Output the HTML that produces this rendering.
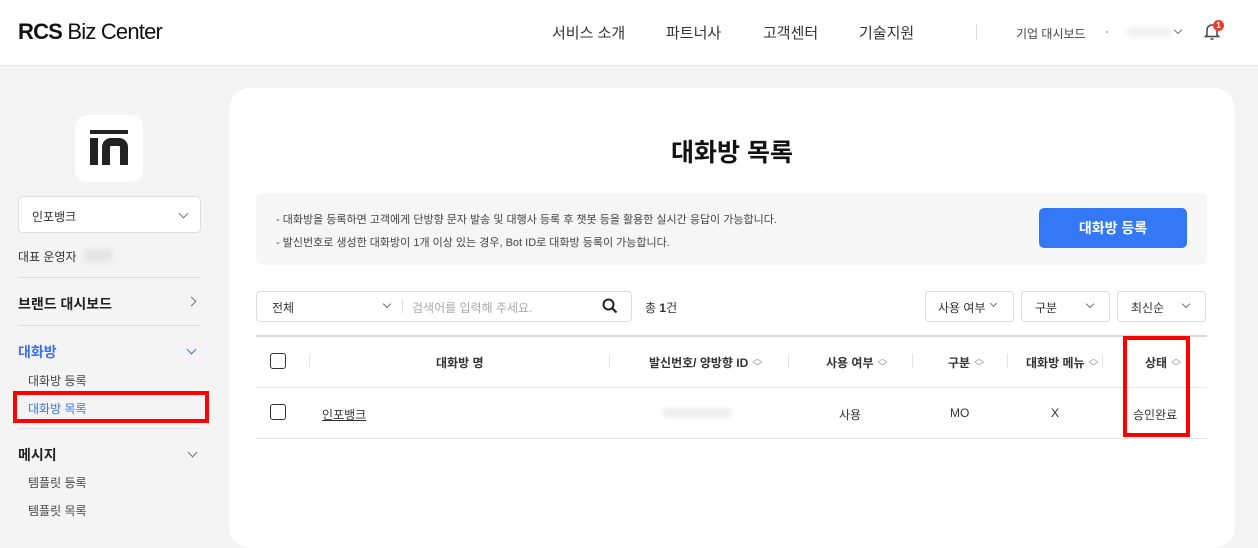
<!DOCTYPE html>
<html><head><meta charset="utf-8"><style>
*{margin:0;padding:0;box-sizing:border-box}
body{width:1258px;height:527px;overflow:hidden;background:#f4f4f4;font-family:"Liberation Sans","Noto Sans CJK KR",sans-serif;color:#222;position:relative}
.a{position:absolute;white-space:nowrap}
.hdr{position:absolute;left:0;top:0;width:1258px;height:66px;background:#fff;border-bottom:1px solid #e4e4e4}
.card{position:absolute;left:229px;top:88px;width:1006px;height:460px;background:#fff;border-radius:22px}
.chev{display:inline-block;width:7px;height:7px;border-right:1.3px solid #777;border-bottom:1.3px solid #777;transform:rotate(45deg)}
.a>.chev{display:block}
.sel{position:absolute;background:#fff;border:1px solid #ddd;border-radius:4px}
.cb{position:absolute;width:16px;height:16px;border:1.5px solid #333;border-radius:3px;background:#fff}
.sort{display:inline-block;color:#bbb;font-size:10px;line-height:8px;vertical-align:middle;margin-left:4px}
.th{font-size:12px;font-weight:bold;color:#333}
.td{font-size:12px;color:#333}
</style></head><body>
<div class="hdr"></div>
<div class="a" style="left:18px;top:19px;font-size:22px;color:#111;letter-spacing:-0.8px"><b>RCS</b> Biz Center</div>
<div class="a" style="left:552px;top:22px;font-size:15px;color:#333">서비스 소개</div>
<div class="a" style="left:666px;top:22px;font-size:15px;color:#333">파트너사</div>
<div class="a" style="left:763px;top:22px;font-size:15px;color:#333">고객센터</div>
<div class="a" style="left:859px;top:22px;font-size:15px;color:#333">기술지원</div>
<div class="a" style="left:976px;top:24px;width:1px;height:16px;background:#ddd"></div>
<div class="a" style="left:1016px;top:25px;font-size:12px;color:#444">기업 대시보드</div>
<div class="a" style="left:1106px;top:31px;width:2px;height:2px;background:#bbb"></div>
<div class="a" style="left:1126px;top:26px;width:46px;height:12px;background:#f2f2f2;border-radius:6px;filter:blur(2px)"></div>
<div class="a" style="left:1175px;top:27px"><span class="chev" style="width:6px;height:6px"></span></div>
<svg class="a" style="left:1204px;top:21px" width="18" height="20" viewBox="0 0 18 20"><path d="M3 14V9a5 5 0 0 1 10 0v5l1.5 1.5h-13z" fill="none" stroke="#444" stroke-width="1.5"/><path d="M6.5 17.5a2 2 0 0 0 3 0" stroke="#444" stroke-width="1.4" fill="none"/></svg>
<div class="a" style="left:1213px;top:20px;width:11px;height:11px;border-radius:50%;background:#f03c2e;color:#fff;font-size:8px;font-weight:bold;text-align:center;line-height:11px">1</div>

<!-- sidebar -->
<div class="a" style="left:75px;top:115px;width:68px;height:67px;background:#fff;border-radius:12px"></div>
<div class="a" style="left:90px;top:130px;width:38px;height:4px;background:#222"></div>
<div class="a" style="left:90px;top:138px;width:8px;height:27px;background:#222"></div>
<div class="a" style="left:102px;top:138px;width:26px;height:27px;border:8px solid #222;border-bottom:none;border-radius:9px 9px 0 0"></div>
<div class="sel" style="left:18px;top:196px;width:183px;height:37px;border-radius:5px"></div>
<div class="a" style="left:32px;top:208px;font-size:12px;color:#333">인포뱅크</div>
<div class="a" style="left:180px;top:210px"><span class="chev"></span></div>
<div class="a" style="left:18px;top:248px;font-size:12px;color:#333">대표 운영자</div>
<div class="a" style="left:84px;top:249px;width:28px;height:13px;background:#e6e6e6;filter:blur(2px)"></div>
<div class="a" style="left:18px;top:277px;width:183px;height:1px;background:#ddd"></div>
<div class="a" style="left:18px;top:294px;font-size:14px;font-weight:bold;color:#222">브랜드 대시보드</div>
<div class="a" style="left:188px;top:298px"><span class="chev" style="transform:rotate(-45deg)"></span></div>
<div class="a" style="left:18px;top:325px;width:183px;height:1px;background:#ddd"></div>
<div class="a" style="left:18px;top:342px;font-size:14px;font-weight:bold;color:#3b6ff5">대화방</div>
<div class="a" style="left:188px;top:346px"><span class="chev" style="border-color:#3b6ff5"></span></div>
<div class="a" style="left:28px;top:372px;font-size:12px;color:#444">대화방 등록</div>
<div class="a" style="left:13px;top:391px;width:196px;height:32px;border:4px solid #f00"></div>
<div class="a" style="left:28px;top:400px;font-size:12px;color:#3b6ff5">대화방 목록</div>
<div class="a" style="left:18px;top:428px;width:183px;height:1px;background:#ddd"></div>
<div class="a" style="left:18px;top:445px;font-size:14px;font-weight:bold;color:#222">메시지</div>
<div class="a" style="left:189px;top:449px"><span class="chev"></span></div>
<div class="a" style="left:28px;top:474px;font-size:12px;color:#444">템플릿 등록</div>
<div class="a" style="left:28px;top:502px;font-size:12px;color:#444">템플릿 목록</div>

<div class="card"></div>
<div class="a" style="left:0;width:1464px;top:133px;text-align:center;font-size:25px;font-weight:bold;color:#111">대화방 목록</div>
<div class="a" style="left:256px;top:193px;width:951px;height:72px;background:#f6f6f6;border-radius:7px"></div>
<div class="a" style="left:276px;top:211px;font-size:11px;color:#444">- 대화방을 등록하면 고객에게 단방향 문자 발송 및 대행사 등록 후 챗봇 등을 활용한 실시간 응답이 가능합니다.</div>
<div class="a" style="left:276px;top:234px;font-size:11px;color:#444">- 발신번호로 생성한 대화방이 1개 이상 있는 경우, Bot ID로 대화방 등록이 가능합니다.</div>
<div class="a" style="left:1039px;top:208px;width:148px;height:40px;background:#3478f6;border-radius:5px;color:#fff;font-size:14px;font-weight:bold;text-align:center;line-height:40px">대화방 등록</div>

<div class="sel" style="left:256px;top:291px;width:376px;height:31px"></div>
<div class="a" style="left:272px;top:299px;font-size:12px;color:#333">전체</div>
<div class="a" style="left:384px;top:301px"><span class="chev" style="width:6px;height:6px"></span></div>
<div class="a" style="left:402px;top:299px;width:1px;height:14px;background:#ddd"></div>
<div class="a" style="left:412px;top:299px;font-size:12px;color:#aaa">검색어를 입력해 주세요.</div>
<svg class="a" style="left:602px;top:298px" width="16" height="16" viewBox="0 0 16 16"><circle cx="6.5" cy="6.5" r="5" fill="none" stroke="#222" stroke-width="2"/><path d="M10.5 10.5l4 4" stroke="#222" stroke-width="2.2"/></svg>
<div class="a" style="left:645px;top:299px;font-size:12px;color:#333">총 <b>1</b>건</div>
<div class="sel" style="left:925px;top:291px;width:89px;height:31px"></div>
<div class="a" style="left:938px;top:299px;font-size:12px;color:#333">사용 여부</div>
<div class="a" style="left:991px;top:301px"><span class="chev" style="width:5px;height:5px"></span></div>
<div class="sel" style="left:1021px;top:291px;width:89px;height:31px"></div>
<div class="a" style="left:1035px;top:299px;font-size:12px;color:#333">구분</div>
<div class="a" style="left:1087px;top:301px"><span class="chev" style="width:6px;height:6px"></span></div>
<div class="sel" style="left:1117px;top:291px;width:89px;height:31px"></div>
<div class="a" style="left:1131px;top:299px;font-size:12px;color:#333">최신순</div>
<div class="a" style="left:1183px;top:301px"><span class="chev" style="width:6px;height:6px"></span></div>

<div class="a" style="left:256px;top:335px;width:951px;height:2px;background:#d8d8d8"></div>
<div class="cb" style="left:270px;top:353px"></div>
<div class="a" style="left:309px;top:354px;width:1px;height:14px;background:#e4e4e4"></div>
<div class="a th" style="left:436px;top:354px">대화방 명</div>
<div class="a" style="left:609px;top:354px;width:1px;height:14px;background:#e4e4e4"></div>
<div class="a th" style="left:649px;top:354px">발신번호/ 양방향 ID<span class="sort">︿<br>﹀</span></div>
<div class="a" style="left:788px;top:354px;width:1px;height:14px;background:#e4e4e4"></div>
<div class="a th" style="left:826px;top:354px">사용 여부<span class="sort">︿<br>﹀</span></div>
<div class="a" style="left:912px;top:354px;width:1px;height:14px;background:#e4e4e4"></div>
<div class="a th" style="left:948px;top:354px">구분<span class="sort">︿<br>﹀</span></div>
<div class="a" style="left:1007px;top:354px;width:1px;height:14px;background:#e4e4e4"></div>
<div class="a th" style="left:1026px;top:354px">대화방 메뉴<span class="sort">︿<br>﹀</span></div>
<div class="a" style="left:1102px;top:354px;width:1px;height:14px;background:#e4e4e4"></div>
<div class="a th" style="left:1145px;top:354px">상태<span class="sort">︿<br>﹀</span></div>
<div class="a" style="left:256px;top:387px;width:951px;height:1px;background:#e4e4e4"></div>
<div class="cb" style="left:270px;top:404px"></div>
<div class="a td" style="left:322px;top:406px;text-decoration:underline">인포뱅크</div>
<div class="a" style="left:662px;top:408px;width:70px;height:10px;background:#eee;border-radius:5px;filter:blur(2px)"></div>
<div class="a td" style="left:839px;top:406px">사용</div>
<div class="a td" style="left:950px;top:406px">MO</div>
<div class="a td" style="left:1051px;top:406px">X</div>
<div class="a td" style="left:1133px;top:406px">승인완료</div>
<div class="a" style="left:256px;top:438px;width:951px;height:1px;background:#e4e4e4"></div>
<div class="a" style="left:1123px;top:336px;width:67px;height:101px;border:4px solid #f00"></div>
</body></html>
